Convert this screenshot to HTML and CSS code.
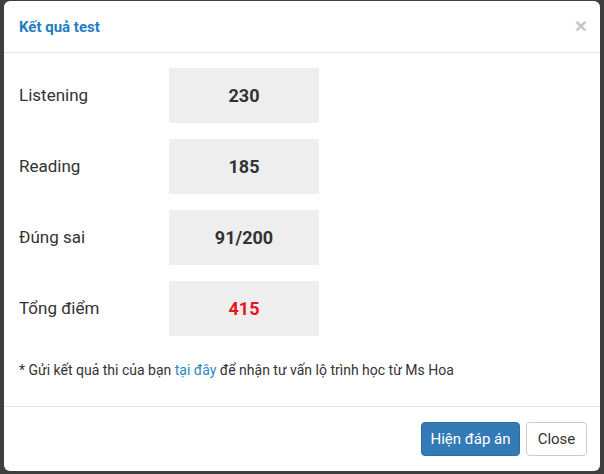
FILE: index.html
```html
<!DOCTYPE html>
<html lang="vi">
<head>
<meta charset="utf-8">
<title>Kết quả test</title>
<link rel="stylesheet" href="styles.css">
</head>
<body>
<div class="modal">
  <div class="modal-header">
    <h4 class="modal-title">Kết quả test</h4>
    <button class="close" type="button">×</button>
  </div>
  <div class="modal-body">
    <div class="row">
      <div class="label">Listening</div>
      <div class="value">230</div>
    </div>
    <div class="row">
      <div class="label">Reading</div>
      <div class="value">185</div>
    </div>
    <div class="row">
      <div class="label">Đúng sai</div>
      <div class="value">91/200</div>
    </div>
    <div class="row">
      <div class="label">Tổng điểm</div>
      <div class="value total">415</div>
    </div>
    <p class="note">* Gửi kết quả thi của bạn <a href="#">tại đây</a> để nhận tư vấn lộ trình học từ Ms Hoa</p>
  </div>
  <div class="modal-footer">
    <button class="btn btn-primary" type="button">Hiện đáp án</button>
    <button class="btn btn-default" type="button">Close</button>
  </div>
</div>
</body>
</html>
```
FILE: styles.css
```css
* { box-sizing: border-box; }
html, body { margin: 0; padding: 0; }
body {
  width: 604px;
  height: 474px;
  overflow: hidden;
  background: #3f3f3f;
  font-family: Roboto, "Noto Sans", sans-serif;
  color: #333;
  padding: 1px 0 0 4px;
}
.modal {
  width: 596px;
  height: 470px;
  background: #fff;
  border-radius: 6px;
  display: flex;
  flex-direction: column;
}
.modal-header {
  height: 52px;
  border-bottom: 1px solid #e5e5e5;
  padding: 0 15px;
  display: flex;
  align-items: center;
  justify-content: space-between;
}
.modal-title {
  margin: 0;
  font-size: 15px;
  font-weight: 700;
  color: #1f7ec2;
}
.close {
  border: 0;
  background: none;
  padding: 0 0 3px 0;
  font-family: "Liberation Sans", sans-serif;
  font-size: 21px;
  font-weight: 700;
  color: #c4c4c4;
  line-height: 1;
  margin-right: -2px;
}
.modal-body {
  flex: 1;
  padding: 15px 15px 0 15px;
}
.row {
  display: flex;
  align-items: center;
  margin-bottom: 16px;
}
.label {
  width: 150px;
  font-size: 17px;
  padding-bottom: 1px;
}
.value {
  width: 150px;
  height: 55px;
  background: #eeeeee;
  display: flex;
  align-items: center;
  justify-content: center;
  font-size: 18px;
  font-weight: 700;
  color: #333;
}
.value.total { color: #e8151b; }
.note {
  margin: 24px 0 0 0;
  font-size: 14px;
  line-height: 20px;
}
.note a {
  color: #2a87c4;
  text-decoration: none;
}
.modal-footer {
  height: 65px;
  border-top: 1px solid #e5e5e5;
  padding: 0 13px 0 15px;
  display: flex;
  align-items: center;
  justify-content: flex-end;
  gap: 6px;
}
.btn {
  height: 34px;
  font-family: Roboto, sans-serif;
  font-size: 15px;
  border-radius: 4px;
  padding: 0 4px;
  border: 1px solid transparent;
  white-space: nowrap;
}
.btn-primary {
  background: #337ab7;
  border-color: #2e6da4;
  color: #fff;
  width: 99px;
}
.btn-default {
  background: #fff;
  border-color: #ccc;
  color: #333;
  width: 61px;
}
```
